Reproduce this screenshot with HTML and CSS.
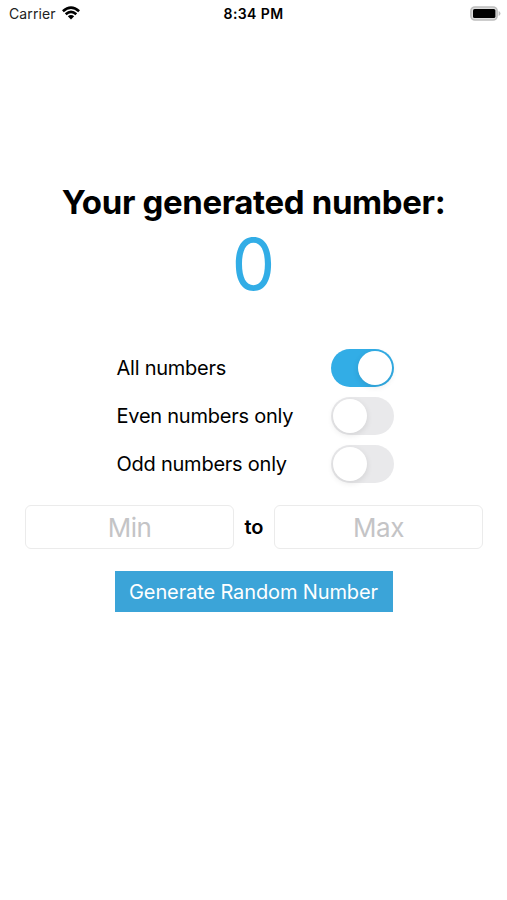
FILE: index.html
```html
<!DOCTYPE html>
<html lang="en">
<head>
<meta charset="utf-8">
<title>Random Number</title>
<link rel="stylesheet" href="styles.css">
</head>
<body>
<header class="status">
  <div class="carrier"><span class="carrier-name">Carrier</span>
    <svg class="wifi" width="18" height="14" viewBox="0 0 18 14" fill="none" stroke="#000" stroke-width="2.6">
      <path d="M.9 5.2Q9-2.1 17.1 5.2M3.7 8.3Q9 3.5 14.3 8.3"/>
      <path d="M5.8 10.3Q9 7.8 12.2 10.3L9 13.5Z" fill="#000" stroke="none"/>
    </svg>
  </div>
  <span class="time">8:34 PM</span>
  <svg class="battery" width="31" height="15" viewBox="0 0 31 15">
    <rect x=".9" y="1" width="26.2" height="13" rx="4" fill="#ddd" stroke="#bdbdbd" stroke-width="1.6"/>
    <rect x="3" y="3" width="22.4" height="9" rx="1.6" fill="#000"/>
    <path d="M28.6 5.1Q30.5 5.9 30.5 7.5T28.6 9.9Z" fill="#bdbdbd"/>
  </svg>
</header>
<main>
  <h1 class="title">Your generated number:</h1>
  <div class="result"><span class="digit">0</span></div>
  <section class="options">
    <label class="option"><span class="all">All numbers</span><i class="switch on"></i></label>
    <label class="option"><span class="even">Even numbers only</span><i class="switch"></i></label>
    <label class="option"><span class="odd">Odd numbers only</span><i class="switch"></i></label>
  </section>
  <div class="range">
    <input class="field" type="text" placeholder="Min">
    <span class="to">to</span>
    <input class="field" type="text" placeholder="Max">
  </div>
  <button class="generate">Generate Random Number</button>
</main>
</body>
</html>
```
FILE: styles.css
```css
* { box-sizing: border-box; }
body { margin: 0; height: 900px; overflow: hidden; background: #fff; color: #000; font-family: Inter, "Liberation Sans", sans-serif; }
.status { height: 27px; padding: 0 6px 0 9px; display: grid; grid-template-columns: 1fr auto 1fr; align-items: center; font-size: 14px; }
.carrier { display: flex; align-items: center; gap: 6px; color: #222; }
.carrier-name { letter-spacing: .1px; }
.wifi { margin-top: -1px; }
.time { font-weight: 600; letter-spacing: .4px; margin-right: 3px; }
.battery { justify-self: end; }
main { display: flex; flex-direction: column; align-items: center; }
.title { margin: 155px 0 0; font-size: 33px; line-height: 40px; font-weight: 700; letter-spacing: -.36px; white-space: nowrap; }
.result { height: 84px; line-height: 84px; font-size: 71px; color: #32ade6; }
.digit { display: inline-block; transform: scaleX(.97); }
.options { width: 279px; margin: 43px 0 0 1px; display: flex; flex-direction: column; gap: 10px; }
.option { height: 38px; display: flex; justify-content: space-between; align-items: center; padding-left: 2px; font-size: 20px; letter-spacing: -.24px; white-space: nowrap; }
.switch { width: 63px; height: 38px; border-radius: 19px; padding: 2px; background: #e9e9eb; display: flex; }
.switch::before { content: ""; width: 34px; height: 34px; border-radius: 50%; background: #fff; box-shadow: 0 2px 6px rgba(0,0,0,.1); }
.on { background: #32ade6; justify-content: flex-end; }
.range { width: 458px; margin: 22px 0 0 1px; display: flex; justify-content: space-between; align-items: center; }
.field { width: 209px; height: 44px; padding: 0; border: 1px solid #ebebeb; border-radius: 6px; background: #fff; text-align: center; font: 400 26px Inter, "Liberation Sans", sans-serif; letter-spacing: -.5px; }
.field::placeholder { color: #c4c4c6; opacity: 1; }
.to { font-size: 20px; font-weight: 600; }
.generate { width: 278px; height: 41px; margin-top: 22px; padding: 0; border: 0; background: #3ba4d8; color: #fff; font: 400 20px Inter, "Liberation Sans", sans-serif; letter-spacing: -.12px; white-space: nowrap; }
```
